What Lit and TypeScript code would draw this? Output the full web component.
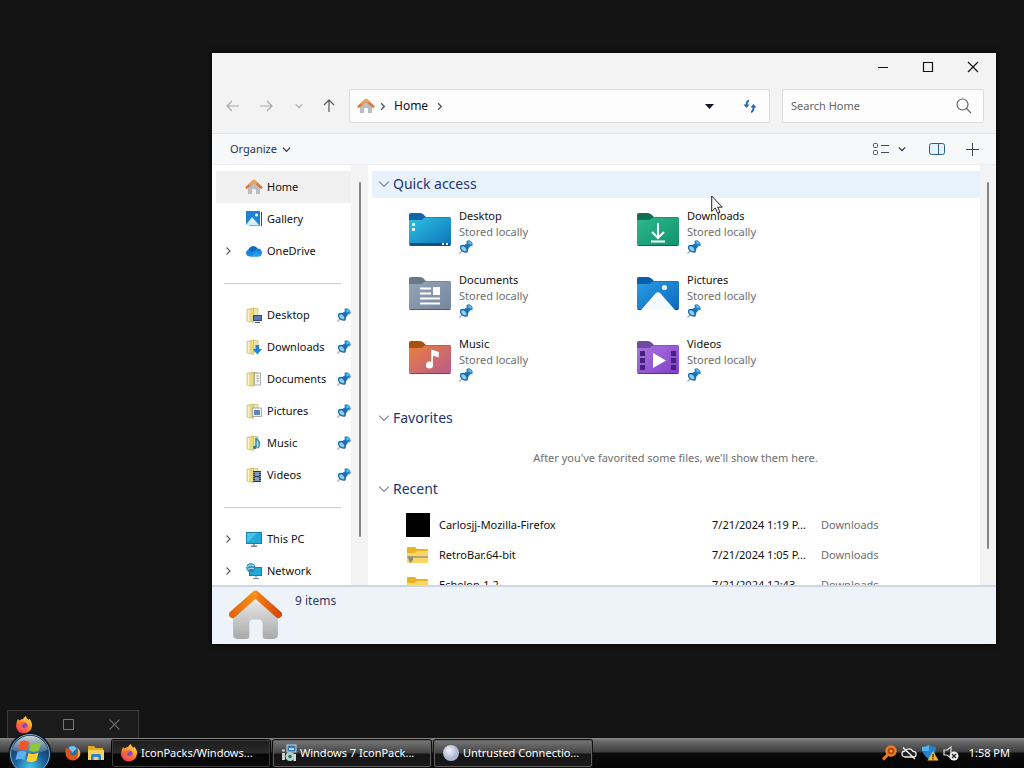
import { LitElement, html, svg, css, nothing } from "lit";
import { customElement } from "lit/decorators.js";

/* ---------- glyphs ---------- */

const house = (size: number) => html`<svg class="ic" width=${size} height=${size} viewBox="0 0 52 52" aria-hidden="true">
  <defs>
    <linearGradient id="hw" x1="0" y1="0" x2="0" y2="1"><stop offset="0" stop-color="#efefef" /><stop offset="1" stop-color="#a9a9a9" /></linearGradient>
    <linearGradient id="hr" x1="0" y1="0" x2="1" y2="0"><stop offset="0" stop-color="#e2660f" /><stop offset=".5" stop-color="#f7941d" /><stop offset=".56" stop-color="#ef7b12" /><stop offset="1" stop-color="#d9480a" /></linearGradient>
  </defs>
  <path d="M4 25 26 6 48 25V45Q48 49 44 49H36Q33 49 33 46V34Q33 30 29 30H23Q20 30 20 34V46Q20 49 17 49H8Q4 49 4 45Z" fill="url(#hw)" />
  <path d="M3.500 25 26 5 48.500 25" fill="none" stroke="url(#hr)" stroke-width="7" stroke-linecap="round" stroke-linejoin="round" />
</svg>`;

const smallHouse = html`<svg class="ic" width="18" height="16" viewBox="0 0 18 16" aria-hidden="true">
  <path d="M3 8 9 3 15 8V15H11V11Q11 10 10 10H8Q7 10 7 11V15H3Z" fill="#b9bcc0" />
  <path d="M1.800 8.500 9 2 16.200 8.500" fill="none" stroke="#d97a3c" stroke-width="2.600" stroke-linecap="round" stroke-linejoin="round" />
  <path d="M5 5.500 9 2 11 3.800" fill="none" stroke="#eda552" stroke-width="2" stroke-linecap="round" stroke-linejoin="round" />
</svg>`;

const pin = html`<svg class="ic" width="14" height="14" viewBox="0 0 14 14" role="img" aria-label="Pinned">
  <path d="M3.500 10.500 .500 13.500" stroke="#9aa9b5" stroke-width="1.200" />
  <path d="M4.500 5.500 8.500 3 11.500 6 8.500 10Z" fill="#1a76bb" />
  <path d="M1 6Q4 3.500 7 6 10 9 8.500 12.500 5 13.500 2.500 11 .500 9 1 6Z" fill="#1568ab" />
  <path d="M2.200 6.700Q4.300 5.500 6 7.200 7.900 9 7.400 11.200 5 11.800 3.500 10.200 2 8.700 2.200 6.700Z" fill="#8fd0f3" />
  <path d="M7.500 1Q10 -.500 12 1.500 14.500 3.500 13.300 6 11 6.500 9.200 5 7.300 3.200 7.500 1Z" fill="#1d83cc" />
  <path d="M8.800 1.500Q10.500 .800 11.800 2.200 13 3.300 12.500 4.500 10.800 4.500 9.700 3.500 8.700 2.500 8.800 1.500Z" fill="#5fb8ec" />
</svg>`;

const chevron = (dir: "right" | "down", size: number, color: string, w = 1.2) => html`<svg class="ic" width=${size} height=${size} viewBox="0 0 10 10" fill="none" stroke=${color} stroke-width=${w} aria-hidden="true">
  <path d=${dir === "right" ? "M3.500 1.500 7 5 3.500 8.500" : "M1 3 5 7 9 3"} />
</svg>`;

const sideGlyph: Record<string, unknown> = {
  gallery: svg`<rect x="3" y="1" width="13" height="14" fill="#1b4f9c"/><rect x="0" y="0" width="14" height="14" fill="#1b84d8"/><path d="M0 14 6 6 13 14Z" fill="#d6efff"/><circle cx="10.500" cy="4" r="1.500" fill="#fff"/><path d="M14.500 0V15H2" fill="none" stroke="#fff"/>`,
  cloud: svg`<path d="M3.500 13.500A3.600 3.600 0 0 1 2.500 6.500 5.200 5.200 0 0 1 11.500 5.500 4.100 4.100 0 0 1 13 13.500Z" fill="#1a86dc"/><path d="M2.500 6.500A5.200 5.200 0 0 1 11.500 5.500L6 9Z" fill="#1169bc"/><path d="M4 13.500 10 9 15.800 11.500 13 13.500Z" fill="#2c9cea"/>`,
  pc: svg`<rect x="0" y="1" width="16" height="12" fill="#1b7fa8"/><rect x="1" y="2" width="14" height="10" fill="#23a9d8"/><path d="M1 12V2H11Z" fill="#45c6e8"/><path d="M8 13V15M5 15.200H11" stroke="#74848f" stroke-width="1.500"/>`,
  network: svg`<rect x="3" y="4" width="13" height="9" fill="#1b7fa8"/><rect x="4" y="5" width="11" height="7" fill="#23a9d4"/><path d="M10 13V15M7 15.500H13" stroke="#74848f"/><circle cx="4.800" cy="4.800" r="4.600" fill="#2c87b5"/><path d="M1 4Q4 1 8 3M1.500 6.500Q5 4 8 6" stroke="#a5e0ef" fill="none" stroke-width="1.200"/>`,
};

const folderBadge: Record<string, unknown> = {
  desktop: svg`<rect x="7" y="8" width="9" height="6" fill="#2c4a86"/><rect x="8" y="9" width="7" height="4" fill="#5577b8"/><path d="M9 15.500H14" stroke="#555"/>`,
  download: svg`<path d="M9.500 6H13V10H16L11.300 15.500 6.800 10H9.500Z" fill="#1f84d6"/>`,
  document: svg`<rect x="8.500" y="2" width="6" height="12" fill="#f5f5f5" stroke="#999" stroke-width=".8"/><path d="M10.500 5H13M10.500 7.500H13M10.500 10H13" stroke="#888" stroke-width=".8"/>`,
  picture: svg`<rect x="6.500" y="5" width="9" height="8.500" fill="#f5f5f5" stroke="#999" stroke-width=".8"/><rect x="8" y="7" width="6" height="5" fill="#5c86b8"/>`,
  music: svg`<path d="M10 3V12M10 3Q13.500 6 13.500 9 13.500 11 12 13" fill="none" stroke="#3a8fb0" stroke-width="1.600"/><circle cx="8.800" cy="12.500" r="1.800" fill="#2c7b9d"/>`,
  video: svg`<rect x="7" y="4" width="8" height="11" fill="#2a3550"/><rect x="9" y="5" width="4" height="4" fill="#7d9cc8"/><rect x="9" y="10" width="4" height="4" fill="#7d9cc8"/><path d="M7.900 5V15M14.100 5V15" stroke="#dfe5ee" stroke-dasharray="1 1"/>`,
};

const sideIcon = (id: string) =>
  id === "home"
    ? smallHouse
    : html`<svg class="ic" width="16" height="16" viewBox="0 0 16 16" aria-hidden="true">${
        folderBadge[id]
          ? svg`<path d="M5 1.500H12V13H5Z" fill="#f0e6ae" stroke="#c9b968" stroke-width=".7"/><path d="M1 2.500 7.500 1V15.500L1 14Z" fill="#e9da82" stroke="#c9b45a" stroke-width=".7"/><path d="M2.500 3V14" stroke="#fbf6cf" stroke-width="1.500"/>${folderBadge[id]}`
          : sideGlyph[id]
      }</svg>`;

const bigFolder = (id: string, back: string, from: string, to: string, art: unknown) => html`<svg class="ic" width="44" height="36" viewBox="0 0 44 36" aria-hidden="true">
  <defs><linearGradient id="f-${id}" x1="0" y1="0" x2="1" y2="1"><stop offset="0" stop-color=${from} /><stop offset="1" stop-color=${to} /></linearGradient></defs>
  <path d="M1 3Q1 1 3 1H12Q14 1 15.500 2.500L18 5H41Q43 5 43 7V20H1Z" fill=${back} />
  <path d="M1 8H12Q14 8 15.500 6.500L17 5.500H41Q43 5.500 43 7.500V32Q43 34 41 34H3Q1 34 1 32Z" fill="url(#f-${id})" />
  <path d="M1.500 33.500H42.500" stroke="#000" stroke-opacity=".35" />
  ${art}
</svg>`;

const tiles = [
  { name: "Desktop", icon: bigFolder("desk", "#0f66a8", "#2cc1e2", "#0f72b8", svg`<path d="M4 11h3v3h-3zM4 16h3v3h-3z" fill="#d8f6ff"/><path d="M2 31H42V33H2Z" fill="#0c4f7c"/><path d="M34 31h2v2h-2zM38 31h2v2h-2z" fill="#fff"/>`) },
  { name: "Downloads", icon: bigFolder("down", "#10704f", "#2cb88c", "#12936e", svg`<path d="M22 11V25M16 20 22 26 28 20M15 29.500H29" fill="none" stroke="#fff" stroke-width="2"/>`) },
  { name: "Documents", icon: bigFolder("docs", "#66788a", "#93a4b6", "#76889f", svg`<path d="M12 12.500H23M12 17.500H23M12 22.500H32M12 27.500H32" stroke="#fff" stroke-width="2.200"/><path d="M25 11h7v8h-7z" fill="#fff"/>`) },
  { name: "Pictures", icon: bigFolder("pics", "#0b5ea8", "#2a9ce4", "#0d67ba", svg`<path d="M5 34 19.500 17.500Q22 15 24.500 17.500L39 34Z" fill="#f4faff"/><circle cx="28.500" cy="11.500" r="2.600" fill="#e4f4ff"/>`) },
  { name: "Music", icon: bigFolder("music", "#a8500f", "#ec7f3c", "#b65b90", svg`<path d="M24 25V10.500L30 12.500V16.500L25 15" fill="#fff" stroke="#fff" stroke-width="1.500"/><circle cx="21.500" cy="25" r="3.600" fill="#fff"/>`) },
  { name: "Videos", icon: bigFolder("video", "#6e4aa0", "#a774e0", "#8240c8", svg`<path d="M17 13V28L30 20.500Z" fill="#fff"/><path d="M4 11h5v5h-5zM4 18h5v5h-5zM4 25h5v5h-5zM35 11h5v5h-5zM35 18h5v5h-5zM35 25h5v5h-5z" fill="#45217c"/>`) },
];

const zipFolder = (zip: boolean) => html`<svg class="ic" width="24" height="20" viewBox="0 0 24 20" aria-hidden="true">
  <path d="M1 3Q1 2 2 2H9L11 4H21Q22 4 22 5V17Q22 18 21 18H2Q1 18 1 17Z" fill="#e9b326" />
  <path d="M1 8H9L11 6H22V17Q22 18 21 18H2Q1 18 1 17Z" fill="#fbd667" />
  ${zip ? svg`<path d="M1 12H22" stroke="#b3a67a" stroke-width="2"/><path d="M2 11.500H7V15L4.500 18 3 16Z" fill="#8d8d80"/>` : nothing}
</svg>`;

const firefox = (size: number) => html`<svg class="ic" width=${size} height=${size} viewBox="0 0 18 18" aria-hidden="true">
  <defs><linearGradient id="fx" x1=".8" y1="0" x2=".2" y2="1"><stop offset="0" stop-color="#ffe14a" /><stop offset=".5" stop-color="#ff8a1e" /><stop offset="1" stop-color="#f0286a" /></linearGradient></defs>
  <path d="M3 3 4.500 4.500Q6 2.800 8 3 9 1 11 0 11 2.500 13.500 4L14 2.500Q17.500 6 17 10 16 17 9 17.500 2 17 1 10.500 1 6 3 3Z" fill="url(#fx)" />
  <circle cx="9" cy="10" r="3.600" fill="#8a43cc" />
  <path d="M4.500 6.500Q8 5 10 7.500L7.500 9Q6 10.500 8.500 12 11 12 12 9.500 13.500 13 10.500 14.500 5 15.500 4 11Z" fill="#ff6a3a" fill-opacity=".85" />
</svg>`;

const oldFirefox = html`<svg class="ic" width="16" height="16" viewBox="0 0 18 18" aria-hidden="true">
  <circle cx="8.500" cy="8" r="7.500" fill="#2a6ca6" /><path d="M4 3Q9 -1 13 4L8 9Z" fill="#7cc2ea" />
  <path d="M1 3 4 5Q7 5 8 7L5.500 9Q7 13 12 11 15 8 14 3 18 7 17 11 15 17 9 17.500 1 17 .5 9 .5 5 1 3Z" fill="#d9571a" />
  <path d="M14 3Q18 7 17 11 16 14 13 15.500 16 10 14 3Z" fill="#f9b233" />
</svg>`;

const explorer = html`<svg class="ic" width="18" height="16" viewBox="0 0 18 16" aria-hidden="true">
  <path d="M1 1H7L8.500 3H16V7H1Z" fill="#e5a71c" /><path d="M1 5H17V15H1Z" fill="#fbd35a" /><path d="M4 15V10.500Q4 9 5.500 9H12.500Q14 9 14 10.500V15H11.500V12H6.500V15Z" fill="#2a84d6" />
</svg>`;

const orb = html`<svg class="ic" width="44" height="44" viewBox="0 0 44 44" aria-hidden="true">
  <defs>
    <radialGradient id="orb" cx=".5" cy=".85" r=".8"><stop offset="0" stop-color="#46c8f0" /><stop offset=".5" stop-color="#1b5f9a" /><stop offset="1" stop-color="#0e2c4e" /></radialGradient>
    <linearGradient id="gloss" x1="0" y1="0" x2="0" y2="1"><stop offset="0" stop-color="#fff" stop-opacity=".8" /><stop offset="1" stop-color="#fff" stop-opacity=".12" /></linearGradient>
  </defs>
  <circle cx="22" cy="22" r="21.500" fill="#0a1420" />
  <circle cx="22" cy="22" r="19.500" fill="url(#orb)" stroke="#7fb0cf" />
  <path d="M4 18A18.500 18.500 0 0 1 40 18Q22 25 4 18Z" fill="url(#gloss)" />
  <path d="M12 10Q16 7 21 10L19 18Q14.500 16 10 18Z" fill="#f0562a" />
  <path d="M23 11Q28 13 33 10L31 18.500Q26 21 21 18.500Z" fill="#8dc63f" />
  <path d="M9.500 20Q14 18 18.500 20L16.500 28Q12 26 7.500 28Z" fill="#5fb2ee" />
  <path d="M20.500 21Q25.500 23 30.500 20.500L28.500 28.500Q23.500 31.500 18.500 29Z" fill="#ffd02e" />
</svg>`;

const installer = html`<svg class="ic" width="16" height="18" viewBox="0 0 16 18" aria-hidden="true">
  <rect x="6" y="1" width="9" height="7" fill="#2d7bbd" stroke="#c3d6e4" /><path d="M8 5H13" stroke="#e7f5ff" stroke-width="1.500" />
  <path d="M1 9H4V16H1ZM1 5.500H4V7.500H1Z" fill="#c9ced2" /><circle cx="9" cy="12.500" r="4.500" fill="#b5d3cc" /><circle cx="9" cy="12.500" r="1.800" fill="#1f7a68" /><path d="M12.500 10h2.500v7h-2.500z" fill="#d9dde0" />
</svg>`;

const globe = html`<svg class="ic" width="18" height="18" viewBox="0 0 18 18" aria-hidden="true">
  <defs><radialGradient id="gl" cx=".4" cy=".35"><stop offset="0" stop-color="#f0f3fb" /><stop offset="1" stop-color="#aeb7d2" /></radialGradient></defs>
  <circle cx="9" cy="9" r="8" fill="url(#gl)" />
</svg>`;

/* ---------- data ---------- */

const places = [
  { name: "Home", icon: "home", current: true },
  { name: "Gallery", icon: "gallery" },
  { name: "OneDrive", icon: "cloud", tree: true },
  null,
  { name: "Desktop", icon: "desktop", pinned: true },
  { name: "Downloads", icon: "download", pinned: true },
  { name: "Documents", icon: "document", pinned: true },
  { name: "Pictures", icon: "picture", pinned: true },
  { name: "Music", icon: "music", pinned: true },
  { name: "Videos", icon: "video", pinned: true },
  null,
  { name: "This PC", icon: "pc", tree: true },
  { name: "Network", icon: "network", tree: true },
] as ({ name: string; icon: string; current?: boolean; tree?: boolean; pinned?: boolean } | null)[];

const recent = [
  { name: "Carlosjj-Mozilla-Firefox", date: "7/21/2024 1:19 P...", icon: html`<span class="thumb"></span>` },
  { name: "RetroBar.64-bit", date: "7/21/2024 1:05 P...", icon: zipFolder(true) },
  { name: "Echelon-1.2", date: "7/21/2024 12:43 ...", icon: zipFolder(false) },
];

const base = css`
  * { box-sizing: border-box; }
  button, input { font: inherit; color: inherit; margin: 0; padding: 0; border: 0; background: none; }
  button { display: flex; align-items: center; justify-content: center; }
  a { color: inherit; text-decoration: none; }
  .ic { display: block; flex: none; }
`;

/* ---------- file explorer window ---------- */

@customElement("explorer-window")
export class ExplorerWindow extends LitElement {
  static styles = [base, css`
    :host { display: flex; flex-direction: column; background: #f3f3f3; color: #111; overflow: hidden; }
    .title { display: flex; justify-content: flex-end; flex: none; padding-right: 1px; }
    .title button { width: 45px; height: 28px; }
    .nav { display: flex; align-items: center; padding: 8px 12px 10px 6px; flex: none; border-bottom: 1px solid #dfe1e4; }
    .nav .step { width: 30px; height: 33px; }
    .nav .wide { width: 36px; }
    .nav .up { width: 30px; margin-right: 5px; }
    .box { display: flex; align-items: center; height: 34px; background: #fdfdfd; border: 1px solid #dcdcdc; border-radius: 2px; }
    .address { flex: 1; padding: 0 7px; gap: 3px; }
    .crumb { padding: 0 4px; font-size: 12px; }
    .fill { flex: 1; }
    .address .tool { width: 24px; height: 32px; }
    .address .drop { margin-right: 14px; }
    .search { width: 202px; margin-left: 12px; padding: 0 11px 0 8px; }
    .search input { flex: 1; min-width: 0; outline: 0; }
    .search input::placeholder { color: #666; opacity: 1; }
    .commands { display: flex; align-items: center; flex: none; height: 31px; padding: 0 17px 0 18px; background: #f6f8fa; color: #1e3257; border-bottom: 1px solid #ebedf0; }
    .commands button { gap: 5px; height: 28px; }
    .commands .view { gap: 8px; margin-right: 22px; }
    .commands .pane { margin-right: 19px; }
    .body { display: flex; flex: 1; min-height: 0; background: #fff; }
    .side { width: 139px; flex: none; padding: 6px 0 0 4px; overflow: hidden; }
    .place { display: flex; align-items: center; height: 32px; padding-left: 7px; }
    .place.current { background: #f0f0f0; }
    .place .tw { width: 23px; display: flex; flex: none; }
    .place .pic { width: 16px; display: flex; justify-content: center; flex: none; }
    .place .label { flex: 1; margin-left: 5px; white-space: nowrap; }
    .rule { height: 32px; display: flex; align-items: center; padding: 0 10px 0 8px; }
    .rule::before { content: ""; flex: 1; height: 1px; background: #c9c9c9; }
    .track { width: 17px; flex: none; background: #f3f3f3; display: flex; justify-content: center; padding-top: 17px; }
    .track .bar { width: 2px; border-radius: 1px; background: #858585; height: 88%; }
    .track.right { width: 16px; }
    .track.right .bar { height: 91%; }
    .main { flex: 1; min-width: 0; overflow: hidden; padding: 6px 0 0 4px; }
    .head { display: flex; align-items: center; gap: 3px; height: 27px; padding: 0 0 1px 6px; margin: 0; font-size: 14px; font-weight: 400; color: #1e3473; }
    .head.active { background: #e8f2fd; }
    .tiles { display: grid; grid-template-columns: repeat(auto-fill, 228px); grid-auto-rows: 64px; padding: 10px 0 5px 36px; height: 207px; }
    .tile { display: flex; gap: 7px; line-height: 16px; }
    .tile .ic { margin-top: 4px; }
    .tile .text { display: flex; flex-direction: column; }
    .tile .text .ic { margin-top: 0; }
    .sub { color: #6e6e6e; }
    .empty { margin: 0; height: 44px; line-height: 52px; text-align: center; color: #6e6e6e; padding-right: 1px; }
    table { border-collapse: collapse; table-layout: fixed; width: 100%; margin-top: 7px; }
    td { height: 30px; padding: 0; white-space: nowrap; }
    .c-icon { width: 67px; padding-left: 34px; }
    .c-name { width: auto; }
    .c-date { width: 109px; }
    .c-place { width: 159px; color: #6e6e6e; }
    .thumb { display: block; width: 24px; height: 24px; background: #000; }
    .status { display: flex; align-items: flex-start; gap: 13px; flex: none; height: 59px; padding: 2px 17px 0; background: #eef3fa; border-top: 2px solid #ccd6e6; color: #2f3c5a; }
    .status span { line-height: 18px; padding-top: 3px; font-size: 12px; }
  `];

  render() {
    return html`
      <div class="title">
        <button aria-label="Minimize"><svg width="12" height="12" viewBox="0 0 12 12" stroke="#111"><path d="M1 6.500H11" /></svg></button>
        <button aria-label="Maximize"><svg width="12" height="12" viewBox="0 0 12 12" fill="none" stroke="#111" stroke-width="1.200"><path d="M1.500 1.500H10.500V10.500H1.500Z" /></svg></button>
        <button aria-label="Close"><svg width="12" height="12" viewBox="0 0 12 12" stroke="#111" stroke-width="1.200"><path d="M1 1 11 11M11 1 1 11" /></svg></button>
      </div>
      <nav class="nav" aria-label="Location">
        <button class="step" aria-label="Back"><svg width="14" height="12" viewBox="0 0 14 12" fill="none" stroke="#a9a9a9" stroke-width="1.200"><path d="M13 6H1.500M6 1 1 6 6 11" /></svg></button>
        <button class="step wide" aria-label="Forward"><svg width="14" height="12" viewBox="0 0 14 12" fill="none" stroke="#a9a9a9" stroke-width="1.200"><path d="M1 6H12.500M8 1 13 6 8 11" /></svg></button>
        <button class="step" aria-label="Recent locations">${chevron("down", 8, "#a9a9a9", 1.5)}</button>
        <button class="step up" aria-label="Up"><svg width="12" height="14" viewBox="0 0 12 14" fill="none" stroke="#555" stroke-width="1.200"><path d="M6 13V1.500M1 6 6 1 11 6" /></svg></button>
        <div class="box address">
          ${smallHouse} ${chevron("right", 9, "#555", 1.5)}
          <a class="crumb" href="#home">Home</a>
          ${chevron("right", 9, "#555", 1.5)}
          <span class="fill"></span>
          <button class="tool drop" aria-label="Previous locations"><svg width="9" height="5" viewBox="0 0 9 5"><path d="M0 0H9L4.500 5Z" fill="#14142a" /></svg></button>
          <button class="tool" aria-label="Refresh"><svg width="14" height="14" viewBox="0 0 14 14" fill="none" stroke="#2c68a4" stroke-width="2"><path d="M6 1.500Q3.500 2 3.500 7" /><path d="M.500 5.500H6.500L3.500 9Z" fill="#2c68a4" stroke="none" /><path d="M8 13Q10.500 12.500 10.500 8" /><path d="M7.500 8.500H13.500L10.500 5Z" fill="#2c68a4" stroke="none" /></svg></button>
        </div>
        <div class="box search">
          <input type="search" aria-label="Search Home" placeholder="Search Home" />
          <svg class="ic" width="16" height="16" viewBox="0 0 16 16" fill="none" stroke="#666" stroke-width="1.200" aria-hidden="true"><circle cx="6.500" cy="6.500" r="5.500" /><path d="M10.500 10.500 15 15" /></svg>
        </div>
      </nav>
      <div class="commands">
        <button>Organize ${chevron("down", 9, "#1e3257", 1.3)}</button>
        <span class="fill"></span>
        <button class="view" aria-label="Change view">
          <svg width="18" height="14" viewBox="0 0 18 14" fill="none" stroke="#444e60"><rect x="1.500" y="1.500" width="4" height="4" rx="1" /><rect x="1.500" y="8.500" width="4" height="4" rx="1" /><path d="M9 3.500H17M9 10.500H17" /></svg>
          ${chevron("down", 8, "#1e3257", 1.5)}
        </button>
        <button class="pane" aria-label="Preview pane"><svg width="18" height="14" viewBox="0 0 18 14" fill="none" stroke="#2d5d8c"><rect x="1.500" y="1.500" width="15" height="11" rx="2" fill="#e6f3fc" /><path d="M10.500 1.500V12.500" /></svg></button>
        <button aria-label="New"><svg width="14" height="14" viewBox="0 0 14 14" stroke="#444"><path d="M7.500 1V14M1 7.500H14" /></svg></button>
      </div>
      <div class="body">
        <nav class="side" aria-label="Places">
          ${places.map((p) => p
            ? html`<a class="place ${p.current ? "current" : ""}" href="#${p.icon}">
                <span class="tw">${p.tree ? chevron("right", 10, "#666", 1.3) : nothing}</span>
                <span class="pic">${sideIcon(p.icon)}</span>
                <span class="label">${p.name}</span>${p.pinned ? pin : nothing}
              </a>`
            : html`<div class="rule" role="separator"></div>`)}
        </nav>
        <div class="track" aria-hidden="true"><div class="bar"></div></div>
        <main class="main">
          <h2 class="head active">${chevron("down", 12, "#7d8794", 1)}Quick access</h2>
          <div class="tiles">
            ${tiles.map((t) => html`<a class="tile" href="#tile">${t.icon}<span class="text"><span>${t.name}</span><span class="sub">Stored locally</span>${pin}</span></a>`)}
          </div>
          <h2 class="head">${chevron("down", 12, "#7d8794", 1)}Favorites</h2>
          <p class="empty">After you've favorited some files, we'll show them here.</p>
          <h2 class="head">${chevron("down", 12, "#7d8794", 1)}Recent</h2>
          <table aria-label="Recent files">
            <tbody>
              ${recent.map((r) => html`<tr><td class="c-icon">${r.icon}</td><td class="c-name">${r.name}</td><td class="c-date">${r.date}</td><td class="c-place">Downloads</td></tr>`)}
            </tbody>
          </table>
        </main>
        <div class="track right" aria-hidden="true"><div class="bar"></div></div>
      </div>
      <footer class="status">${house(53)}<span>9 items</span></footer>
    `;
  }
}

/* ---------- taskbar ---------- */

@customElement("task-bar")
export class TaskBar extends LitElement {
  static styles = [base, css`
    :host { display: flex; align-items: center; height: 30px; padding: 0 14px 0 8px; color: #fff; background: linear-gradient(#8a8a8a, #6a6a6a 3px, #3d3d3d 14px, #0b0b0b 15px, #050505); }
    .start { width: 44px; height: 30px; align-items: flex-start; }
    .start .ic { margin-top: -6px; }
    .quick { display: flex; gap: 6px; margin: 0 7px 0 13px; }
    .tasks { display: flex; gap: 3px; flex: 1; min-width: 0; }
    .task { width: 158px; height: 27px; padding: 0 7px; gap: 3px; justify-content: flex-start; border: 1px solid #5e5e5e; border-radius: 2px; white-space: nowrap; background: linear-gradient(#747474, #444 12px, #141414 13px, #1a1a1a); box-shadow: 0 0 0 1px #111; }
    .task.on { background: linear-gradient(#1d1d1d, #2b2b2b 12px, #050505 13px, #0a0a0a); border-color: #3c3c3c; box-shadow: 0 0 0 1px #000; }
    .tray { display: flex; align-items: center; gap: 4px; }
    .clock { margin-left: 6px; }
  `];

  render() {
    return html`
      <button class="start" aria-label="Start">${orb}</button>
      <div class="quick">
        <button aria-label="Firefox">${oldFirefox}</button>
        <button aria-label="File Explorer">${explorer}</button>
      </div>
      <div class="tasks">
        <button class="task on">${firefox(18)}IconPacks/Windows...</button>
        <button class="task">${installer}Windows 7 IconPack...</button>
        <button class="task">${globe}Untrusted Connectio...</button>
      </div>
      <div class="tray">
        <svg class="ic" width="16" height="16" viewBox="0 0 16 16" role="img" aria-label="Search tool"><circle cx="10" cy="6" r="4.500" fill="#a8440c" stroke="#f07a1e" stroke-width="2.500" /><path d="M7 9.500 2 14.500" stroke="#f07a1e" stroke-width="3" /><circle cx="10" cy="6" r="1.500" fill="#f9a04e" /></svg>
        <svg class="ic" width="16" height="16" viewBox="0 0 16 16" role="img" aria-label="Cloud offline"><path d="M4 12A3 3 0 0 1 4 6 4.500 4.500 0 0 1 12 6.500 2.800 2.800 0 0 1 13 12Z" fill="#222" stroke="#eee" stroke-width="1.300" /><path d="M2 2.500 14 14" stroke="#eee" stroke-width="1.500" /></svg>
        <svg class="ic" width="18" height="16" viewBox="0 0 18 16" role="img" aria-label="Security alert"><path d="M8 0Q11 2 15 2 15 10 8 14 1 10 1 2 5 2 8 0Z" fill="#1d86d4" /><path d="M8 0Q5 2 1 2V6H8Z" fill="#52b4ee" /><path d="M12 6 17.500 15.500H6.500Z" fill="#fbb62a" /><path d="M12 9V12.500M12 13.300V14.500" stroke="#222" stroke-width="1.300" /></svg>
        <svg class="ic" width="16" height="16" viewBox="0 0 16 16" role="img" aria-label="Sound muted"><path d="M1 5H4L8 2V13L4 10H1Z" fill="none" stroke="#ddd" stroke-width="1.200" /><circle cx="11" cy="11" r="4.500" fill="#eee" /><path d="M9 9 13 13M13 9 9 13" stroke="#222" stroke-width="1.300" /></svg>
        <span class="clock">1:58 PM</span>
      </div>
    `;
  }
}

/* ---------- desktop ---------- */

@customElement("app-root")
export class AppRoot extends LitElement {
  static styles = [base, css`
    :host { display: flex; flex-direction: column; position: relative; min-height: 100vh; overflow: hidden; background: #141414; font: 11px/16px "Noto Sans", "Open Sans", sans-serif; }
    .desk { flex: 1; position: relative; }
    explorer-window { position: absolute; inset: 53px 28px 94px 212px; box-shadow: 0 0 6px #000; }
    .stub { position: absolute; left: 7px; bottom: 0; width: 132px; height: 28px; display: flex; align-items: center; padding-left: 7px; background: #1b1b1b; border: 1px solid #3a3a3a; border-bottom: 0; }
    .stub button { width: 46px; height: 26px; }
    .stub .first { margin-left: 12px; }
    .cursor { position: absolute; left: 711px; top: 195px; }
    task-bar { flex: none; position: relative; }
  `];

  render() {
    return html`
      <div class="desk">
        <explorer-window></explorer-window>
        <div class="stub">
          ${firefox(18)}
          <button class="first" aria-label="Maximize"><svg width="11" height="11" viewBox="0 0 11 11" fill="none" stroke="#777"><path d="M.500 .500H10.500V10.500H.500Z" /></svg></button>
          <button aria-label="Close"><svg width="11" height="11" viewBox="0 0 11 11" stroke="#666" stroke-width="1.200"><path d="M.500 .500 10.500 10.500M10.500 .500 .500 10.500" /></svg></button>
        </div>
        <svg class="ic cursor" width="12" height="19" viewBox="0 0 12 19" aria-hidden="true"><path d="M.700 1V16.500L4.300 13 6.700 18.300 9 17.300 6.700 12.200H11.300Z" fill="#fff" stroke="#222" stroke-width="1" /></svg>
      </div>
      <task-bar></task-bar>
    `;
  }
}
